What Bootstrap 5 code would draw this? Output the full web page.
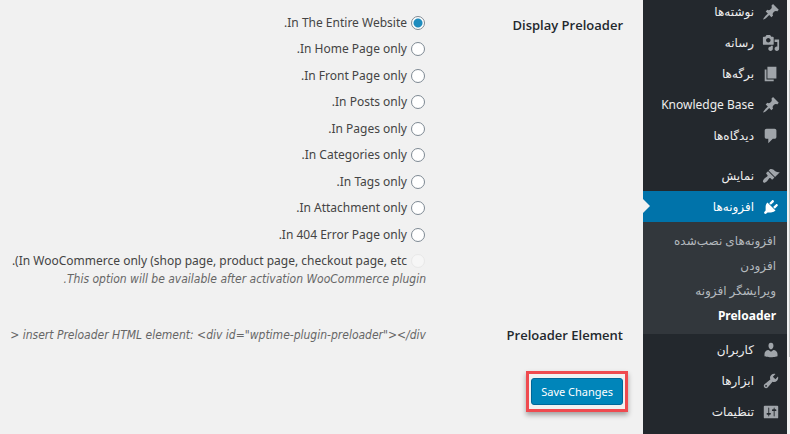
<!DOCTYPE html>
<html lang="fa" dir="rtl">
<head>
<meta charset="utf-8">
<meta name="viewport" content="width=device-width, initial-scale=1">
<title>Preloader</title>
<link href="https://cdn.jsdelivr.net/npm/bootstrap@5.3.0/dist/css/bootstrap.min.css" rel="stylesheet">
<style>
body { background: #f1f1f1; color: #444; font: 12px/18px "Noto Sans", "DejaVu Sans", sans-serif; }
.admin-menu { width: 144px; background: #23282d; }
.menu-list { margin-top: -4px; }
.menu-link { height: 31px; padding-right: 7px; gap: 8px; color: #eee; }
.menu-link svg { width: 18px; height: 18px; fill: #a0a5aa; flex: none; }
.menu-link.current { background: #0073aa; color: #fff; }
.menu-link.current svg { fill: #fff; }
.menu-link.current::after { content: ""; position: absolute; left: 0; top: 8px; border: 7px solid transparent; border-left-color: #f1f1f1; border-right-width: 0; }
.menu-sep { height: 9px; }
.submenu { background: #32373c; padding: 6px 11px 6px 0; }
.submenu a { display: block; line-height: 25px; color: #b4b9be; }
.submenu .chosen { color: #fff; font-weight: 700; }
.scroll-rail { width: 3px; background: #f1f1f1; padding-top: 70px; }
.scroll-thumb { width: 1px; height: 287px; background: #c1c1c1; }
.settings { padding-top: 14px; }
.side-label { width: 217px; padding-right: 20px; color: #23282d; font: 600 13px/18px "Open Sans", "Noto Sans", sans-serif; }
.first-label { padding-top: 2px; }
.choices { min-height: 256px; }
.choice { gap: 4px; height: 18px; }
.choice input { appearance: none; flex: none; width: 14px; height: 14px; margin: 0 1px 0 0; border: 1px solid #7e8993; border-radius: 50%; background: #fff; }
.choice input:checked { background: radial-gradient(circle, #1e8cbe 0 4px, #fff 5px); }
.choice input:disabled { border-color: #e8e8e8; background: #f6f6f6; }
.hint { color: #666; font: italic 12px/18px "DejaVu Sans Condensed", "DejaVu Sans", sans-serif; white-space: nowrap; }
.element-row { margin-top: 38px; }
.save-row { margin-top: 27px; padding-right: 15px; }
.callout { border: 3px solid #ef4a4f; padding: 4px 2px; box-shadow: 0 3px 5px #0005; }
.save-btn { height: 27px; padding: 0 9px; border: 1px solid #006799; border-radius: 3px; background: #0085ba; color: #fff; font-size: 11px; line-height: 18px; }
</style>
</head>
<body>
<div class="d-flex min-vh-100 overflow-hidden">
  <div class="scroll-rail flex-shrink-0"><div class="scroll-thumb"></div></div>
  <nav class="admin-menu flex-shrink-0">
    <div class="menu-list">
      <a href="#" class="menu-link d-flex align-items-center text-decoration-none"><svg viewBox="0 0 20 20"><path d="M10.44 3.02l1.82-1.82 6.36 6.35-1.83 1.82c-1.05-.68-2.48-.57-3.41.36l-.75.75c-.92.93-1.04 2.35-.35 3.41l-1.83 1.82-2.41-2.41-2.8 2.79c-.42.42-3.38 2.71-3.8 2.29s1.86-3.39 2.28-3.81l2.79-2.79L4.1 9.36l1.83-1.82c1.05.69 2.48.57 3.4-.36l.75-.75c.93-.92 1.05-2.35.36-3.41z"/></svg>نوشته‌ها</a>
      <a href="#" class="menu-link d-flex align-items-center text-decoration-none"><svg viewBox="0 0 20 20"><path d="M13 11V4c0-.55-.45-1-1-1h-1.67L9 1H5L3.67 3H2c-.55 0-1 .45-1 1v7c0 .55.45 1 1 1h10c.55 0 1-.45 1-1zM7 4.5c1.38 0 2.5 1.12 2.5 2.5S8.38 9.5 7 9.5 4.5 8.38 4.5 7 5.62 4.5 7 4.5zM14 6h5v10.5c0 1.38-1.12 2.5-2.5 2.5S14 17.88 14 16.5s1.12-2.5 2.5-2.5c.17 0 .34.02.5.05V9h-3V6zm-4 8.05V13h2v3.5c0 1.38-1.12 2.5-2.5 2.5S7 17.88 7 16.5 8.12 14 9.5 14c.17 0 .34.02.5.05z"/></svg>رسانه</a>
      <a href="#" class="menu-link d-flex align-items-center text-decoration-none"><svg viewBox="0 0 20 20"><path d="M6 15V2h10v13H6zm-1 1h8v2H3V5h2v11z"/></svg>برگه‌ها</a>
      <a href="#" class="menu-link d-flex align-items-center text-decoration-none"><svg viewBox="0 0 20 20"><path d="M10.44 3.02l1.82-1.82 6.36 6.35-1.83 1.82c-1.05-.68-2.48-.57-3.41.36l-.75.75c-.92.93-1.04 2.35-.35 3.41l-1.83 1.82-2.41-2.41-2.8 2.79c-.42.42-3.38 2.71-3.8 2.29s1.86-3.39 2.28-3.81l2.79-2.79L4.1 9.36l1.83-1.82c1.05.69 2.48.57 3.4-.36l.75-.75c.93-.92 1.05-2.35.36-3.41z"/></svg>Knowledge Base</a>
      <a href="#" class="menu-link d-flex align-items-center text-decoration-none"><svg viewBox="0 0 20 20"><path d="M5 2h9c1.1 0 2 .9 2 2v7c0 1.1-.9 2-2 2h-2l-5 5v-5H5c-1.1 0-2-.9-2-2V4c0-1.1.9-2 2-2z"/></svg>دیدگاه‌ها</a>
      <div class="menu-sep"></div>
      <a href="#" class="menu-link d-flex align-items-center text-decoration-none"><svg viewBox="0 0 20 20"><path d="M14.48 11.06L7.41 3.99l1.5-1.5c.5-.56 2.3-.47 3.51.32 1.21.8 1.43 1.28 2.91 2.1 1.18.64 2.45 1.26 4.45.85zm-.71.71L6.7 4.7 4.93 6.47c-.39.39-.39 1.02 0 1.41l1.06 1.06c.39.39.39 1.03 0 1.42-.6.6-1.43 1.11-2.21 1.69-.35.26-.7.53-1.01.84C1.43 14.23.4 16.08 1.4 17.07c.99 1 2.84-.03 4.18-1.36.31-.31.58-.66.85-1.02.57-.78 1.08-1.61 1.69-2.21.39-.39 1.02-.39 1.41 0l1.06 1.06c.39.39 1.02.39 1.41 0z"/></svg>نمایش</a>
      <a href="#" class="menu-link current position-relative d-flex align-items-center text-decoration-none"><svg viewBox="0 0 20 20"><path d="M13.11 4.36L9.87 7.6 8 5.73l3.24-3.24c.35-.34 1.05-.2 1.56.32.52.51.66 1.21.31 1.55zm-8 1.77l.91-1.12 9.01 9.01-1.19.84c-.71.71-2.63 1.16-3.82 1.16H6.14L4.9 17.26c-.59.59-1.54.59-2.12 0-.59-.58-.59-1.53 0-2.12l1.24-1.24v-3.88c0-1.13.4-3.19 1.09-3.89zm7.26 3.97l3.24-3.24c.34-.35 1.04-.21 1.55.31.52.51.66 1.21.31 1.55l-3.24 3.25z"/></svg>افزونه‌ها</a>
      <div class="submenu">
        <a href="#" class="text-decoration-none">افزونه‌های نصب‌شده</a>
        <a href="#" class="text-decoration-none">افزودن</a>
        <a href="#" class="text-decoration-none">ویرایشگر افزونه</a>
        <a href="#" class="chosen text-decoration-none">Preloader</a>
      </div>
      <a href="#" class="menu-link d-flex align-items-center text-decoration-none"><svg viewBox="0 0 20 20"><path d="M10 9.25c-2.27 0-2.73-3.44-2.73-3.44C7 4.02 7.82 2 9.97 2c2.16 0 2.98 2.02 2.71 3.81 0 0-.41 3.44-2.68 3.44zm0 2.57L12.72 10c2.39 0 4.52 2.33 4.52 4.53v2.49s-3.65 1.13-7.24 1.13c-3.65 0-7.24-1.13-7.24-1.13v-2.49c0-2.25 1.94-4.48 4.47-4.48z"/></svg>کاربران</a>
      <a href="#" class="menu-link d-flex align-items-center text-decoration-none"><svg viewBox="0 0 20 20"><path d="M16.68 9.77c-1.34 1.34-3.3 1.67-4.95.99l-5.41 6.52c-.99.99-2.59.99-3.58 0s-.99-2.59 0-3.57l6.52-5.42c-.68-1.65-.35-3.61.99-4.95 1.28-1.28 3.12-1.62 4.72-1.06l-2.89 2.89 2.82 2.82 2.86-2.87c.53 1.58.18 3.39-1.08 4.65zM3.81 16.21c.4.39 1.04.39 1.43 0 .4-.4.4-1.04 0-1.43-.39-.4-1.03-.4-1.43 0-.39.39-.39 1.03 0 1.43z"/></svg>ابزارها</a>
      <a href="#" class="menu-link d-flex align-items-center text-decoration-none"><svg viewBox="0 0 20 20"><path d="M18 16V4c0-.55-.45-1-1-1H3c-.55 0-1 .45-1 1v12c0 .55.45 1 1 1h14c.55 0 1-.45 1-1zM8 11h1c.55 0 1 .45 1 1s-.45 1-1 1H8v1.5c0 .28-.22.5-.5.5s-.5-.22-.5-.5V13H6c-.55 0-1-.45-1-1s.45-1 1-1h1V5.5c0-.28.22-.5.5-.5s.5.22.5.5V11zm5-2h-1c-.55 0-1-.45-1-1s.45-1 1-1h1V5.5c0-.28.22-.5.5-.5s.5.22.5.5V7h1c.55 0 1 .45 1 1s-.45 1-1 1h-1v5.5c0 .28-.22.5-.5.5s-.5-.22-.5-.5V9z"/></svg>تنظیمات</a>
    </div>
  </nav>
  <main class="settings flex-grow-1 overflow-hidden">
    <form>
      <div class="d-flex" role="radiogroup" aria-labelledby="display-label">
        <div class="side-label first-label flex-shrink-0" id="display-label">Display Preloader</div>
        <div>
          <div class="choices d-flex flex-column justify-content-between">
            <label class="choice d-flex align-items-center"><input type="radio" name="show" checked><span>In The Entire Website.</span></label>
            <label class="choice d-flex align-items-center"><input type="radio" name="show"><span>In Home Page only.</span></label>
            <label class="choice d-flex align-items-center"><input type="radio" name="show"><span>In Front Page only.</span></label>
            <label class="choice d-flex align-items-center"><input type="radio" name="show"><span>In Posts only.</span></label>
            <label class="choice d-flex align-items-center"><input type="radio" name="show"><span>In Pages only.</span></label>
            <label class="choice d-flex align-items-center"><input type="radio" name="show"><span>In Categories only.</span></label>
            <label class="choice d-flex align-items-center"><input type="radio" name="show"><span>In Tags only.</span></label>
            <label class="choice d-flex align-items-center"><input type="radio" name="show"><span>In Attachment only.</span></label>
            <label class="choice d-flex align-items-center"><input type="radio" name="show"><span>In 404 Error Page only.</span></label>
            <label class="choice d-flex align-items-center"><input type="radio" name="show" disabled><span class="text-nowrap"><bdi>In WooCommerce only (shop page, product page, checkout page, etc</bdi>).</span></label>
          </div>
          <div class="hint">This option will be available after activation WooCommerce plugin.</div>
        </div>
      </div>
      <div class="element-row d-flex">
        <div class="side-label flex-shrink-0">Preloader Element</div>
        <div class="hint"><bdi>&gt; insert Preloader HTML element: &lt;div id="wptime-plugin-preloader"&gt;&lt;/div</bdi></div>
      </div>
      <div class="save-row d-flex">
        <div class="callout d-flex"><button type="submit" class="save-btn">Save Changes</button></div>
      </div>
    </form>
  </main>
</div>
<script src="https://cdn.jsdelivr.net/npm/bootstrap@5.3.0/dist/js/bootstrap.bundle.min.js"></script>
</body>
</html>
